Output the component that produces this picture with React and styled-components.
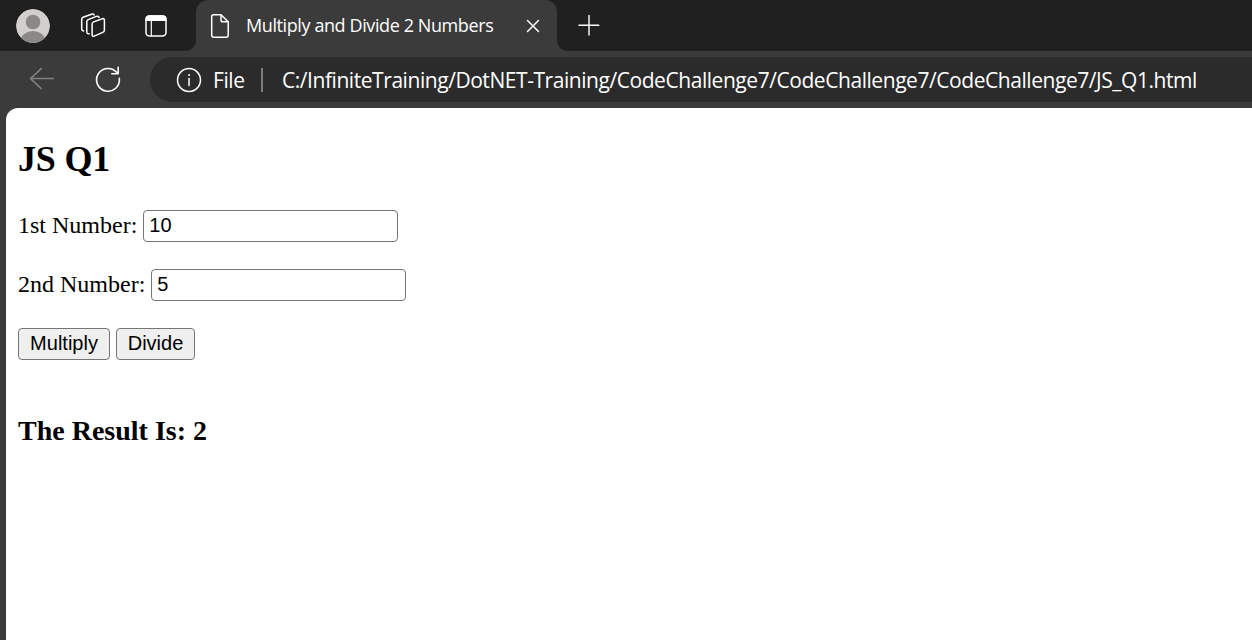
import React from 'react';
import styled, { createGlobalStyle } from 'styled-components';

const GlobalStyle = createGlobalStyle`
  body { margin: 0; overflow: hidden; }
  *, *::before, *::after { box-sizing: border-box; }
`;

const Browser = styled.div`
  display: flex;
  flex-direction: column;
  width: 100%;
  height: 100vh;
  overflow: hidden;
  background: #3b3b3b;
  font-family: 'Open Sans', 'Noto Sans', sans-serif;
  color: #fff;
`;

const Icon = styled.svg`
  display: block;
  flex: none;
  fill: none;
  stroke: ${(p) => p.$color || '#fff'};
  stroke-width: ${(p) => p.$weight || 1.5};
  stroke-linecap: round;
  stroke-linejoin: round;
`;

const TabStrip = styled.header`
  display: flex;
  align-items: stretch;
  height: 51px;
  flex: none;
  background: #202020;
`;

const StripTools = styled.div`
  display: grid;
  grid-template-columns: 64px 65px 22px;
  align-items: center;
  width: 196px;
  padding-left: 16px;
`;

const Tab = styled.div`
  position: relative;
  display: flex;
  align-items: center;
  width: 361px;
  padding: 0 16px 0 14px;
  background: #3b3b3b;
  border-radius: 12px 12px 0 0;

  &::before, &::after {
    content: '';
    position: absolute;
    bottom: 0;
    width: 10px;
    height: 10px;
  }
  &::before {
    left: -10px;
    background: radial-gradient(circle at 0 0, #202020 9.5px, #3b3b3b 10px);
  }
  &::after {
    right: -10px;
    background: radial-gradient(circle at 100% 0, #202020 9.5px, #3b3b3b 10px);
  }
`;

const TabTitle = styled.span`
  flex: 1;
  margin-left: 16px;
  padding-bottom: 1px;
  font-size: 18px;
  line-height: 24px;
  letter-spacing: -0.4px;
  white-space: nowrap;
`;

const NewTab = styled.div`
  display: flex;
  align-items: center;
  padding-left: 20px;
`;

const Toolbar = styled.div`
  display: flex;
  align-items: center;
  flex: none;
  height: 57px;
`;

const NavButtons = styled.div`
  display: flex;
  align-items: center;
  gap: 39px;
  width: 150px;
  padding: 0 0 2px 28px;
`;

const AddressBar = styled.div`
  display: flex;
  align-items: center;
  flex: 1;
  height: 45px;
  padding-left: 26px;
  border-radius: 23px 0 0 23px;
  background: #2b2b2b;
  font-size: 21px;
  line-height: 28px;
  white-space: nowrap;
`;

const Scheme = styled.span`
  width: 33px;
  margin-left: 11px;
  letter-spacing: -0.4px;
`;

const Divider = styled.span`
  width: 2px;
  height: 24px;
  margin: 0 19px 0 15px;
  background: #7b7b7b;
`;

const Url = styled.span`
  letter-spacing: -0.445px;
`;

const Page = styled.main`
  flex: 1;
  margin-left: 6px;
  padding: 30px 12px 0;
  border-top-left-radius: 12px;
  background: #fff;
  color: #000;
  font: 24px/28px 'Liberation Serif', serif;
`;

const Heading = styled.h2`
  margin: 0 0 29px;
  font-size: 36px;
  line-height: 42px;
  letter-spacing: -0.2px;
`;

const Field = styled.div`
  display: flex;
  align-items: center;
  gap: 6px;
  height: 33px;
  margin-bottom: 26px;
`;

const Label = styled.label`
  padding-bottom: 2px;
  white-space: nowrap;
`;

const NumberInput = styled.input`
  width: 255px;
  height: 32px;
  padding: 0 6px 0 5px;
  border: 1px solid #767676;
  border-radius: 4px;
  background: #fff;
  color: #000;
  font: 20px 'Liberation Sans', sans-serif;
`;

const Actions = styled.div`
  display: flex;
  gap: 6px;
  padding-top: 1px;
`;

const Button = styled.button`
  width: ${(p) => p.$width}px;
  height: 32px;
  padding: 0 0 2px;
  border: 1px solid #767676;
  border-radius: 4px;
  background: #efefef;
  color: #000;
  font: 20px 'Liberation Sans', sans-serif;
`;

const Result = styled.h3`
  margin: 55px 0 0;
  font-size: 28px;
  line-height: 32px;
`;

const Avatar = () => (
  <svg width="34" height="34" viewBox="0 0 34 34">
    <clipPath id="avatar"><circle cx="17" cy="17" r="17" /></clipPath>
    <g clipPath="url(#avatar)">
      <circle cx="17" cy="17" r="17" fill="#d2d0cd" />
      <circle cx="17" cy="13" r="7.3" fill="#8b8886" />
      <ellipse cx="17" cy="32" rx="12.5" ry="10" fill="#8b8886" />
    </g>
  </svg>
);

const WorkspacesIcon = () => (
  <Icon width="26" height="26" viewBox="0 0 26 26">
    <path d="M13.6 8.9 22.4 5.7Q24.4 5.1 24.4 7.2V17Q24.4 18.8 22.8 19.4L14.2 23.1Q12.1 23.9 12.1 21.8V11.2Q12.1 9.5 13.6 8.9Z" />
    <path d="M9.2 20.7Q6.8 21.2 6.8 18.8V8.8Q6.8 7.2 8.2 6.6L16.4 3.4Q18.5 2.6 19.2 4.4" />
    <path d="M3.6 17.9Q1.7 17.8 1.7 15.6V6.5Q1.7 4.9 3.1 4.3L11.5 1.2Q13.5.6 14.2 2" />
  </Icon>
);

const PanelIcon = () => (
  <Icon width="22" height="22" viewBox="0 0 22 22">
    <rect x="1" y="1" width="20" height="20" rx="3.5" />
    <path d="M1 5.2V4.5Q1 1 4.5 1h13Q21 1 21 4.5V5.2Z" fill="#fff" />
    <path d="M6.3 6v15" strokeWidth="1.2" />
  </Icon>
);

const PageIcon = () => (
  <Icon width="20" height="26" viewBox="0 0 20 26">
    <path d="M3.5 1.8H11L18.2 8.8V22Q18.2 24.3 16 24.3H4Q1.7 24.3 1.7 22V3.8Q1.7 1.8 3.5 1.8Z" />
    <path d="M11 1.8V7Q11 8.8 12.8 8.8H18.2" />
  </Icon>
);

const CloseIcon = () => (
  <Icon width="16" height="16" viewBox="0 0 16 16">
    <path d="M2.5 2.5 13.5 13.5M13.5 2.5 2.5 13.5" />
  </Icon>
);

const PlusIcon = () => (
  <Icon width="24" height="24" viewBox="0 0 24 24" $weight={1.4}>
    <path d="M2 11.2H21.8M12 1.5V21" />
  </Icon>
);

const BackIcon = () => (
  <Icon width="28" height="24" viewBox="0 0 28 24" $color="#808080" $weight={1.5}>
    <path d="M25.3 11.6H2.5M13.3 1.6 2.5 11.6 13.3 21.6" />
  </Icon>
);

const RefreshIcon = () => (
  <Icon width="26" height="28" viewBox="0 0 26 28" $weight={1.6}>
    <path d="M24.3 13.4A11.4 11.4 0 1 1 21.8 7.6M23.2 2.2V8.7H16.8" />
  </Icon>
);

const InfoIcon = () => (
  <Icon width="26" height="26" viewBox="0 0 26 26">
    <circle cx="13" cy="13" r="11.5" />
    <path d="M13 11.5V18.5" />
    <circle cx="13" cy="8" r="0.5" fill="#fff" stroke="#fff" strokeWidth="1" />
  </Icon>
);

export default function App() {
  return (
    <>
      <GlobalStyle />
      <Browser>
        <TabStrip>
          <StripTools>
            <Avatar />
            <WorkspacesIcon />
            <PanelIcon />
          </StripTools>
          <Tab>
            <PageIcon />
            <TabTitle>Multiply and Divide 2 Numbers</TabTitle>
            <CloseIcon />
          </Tab>
          <NewTab>
            <PlusIcon />
          </NewTab>
        </TabStrip>
        <Toolbar>
          <NavButtons>
            <BackIcon />
            <RefreshIcon />
          </NavButtons>
          <AddressBar>
            <InfoIcon />
            <Scheme>File</Scheme>
            <Divider />
            <Url>C:/InfiniteTraining/DotNET-Training/CodeChallenge7/CodeChallenge7/CodeChallenge7/JS_Q1.html</Url>
          </AddressBar>
        </Toolbar>
        <Page>
          <Heading>JS Q1</Heading>
          <Field>
            <Label htmlFor="first">1st Number:</Label>
            <NumberInput id="first" defaultValue="10" />
          </Field>
          <Field>
            <Label htmlFor="second">2nd Number:</Label>
            <NumberInput id="second" defaultValue="5" />
          </Field>
          <Actions>
            <Button $width={92}>Multiply</Button>
            <Button $width={79}>Divide</Button>
          </Actions>
          <Result>The Result Is: 2</Result>
        </Page>
      </Browser>
    </>
  );
}
